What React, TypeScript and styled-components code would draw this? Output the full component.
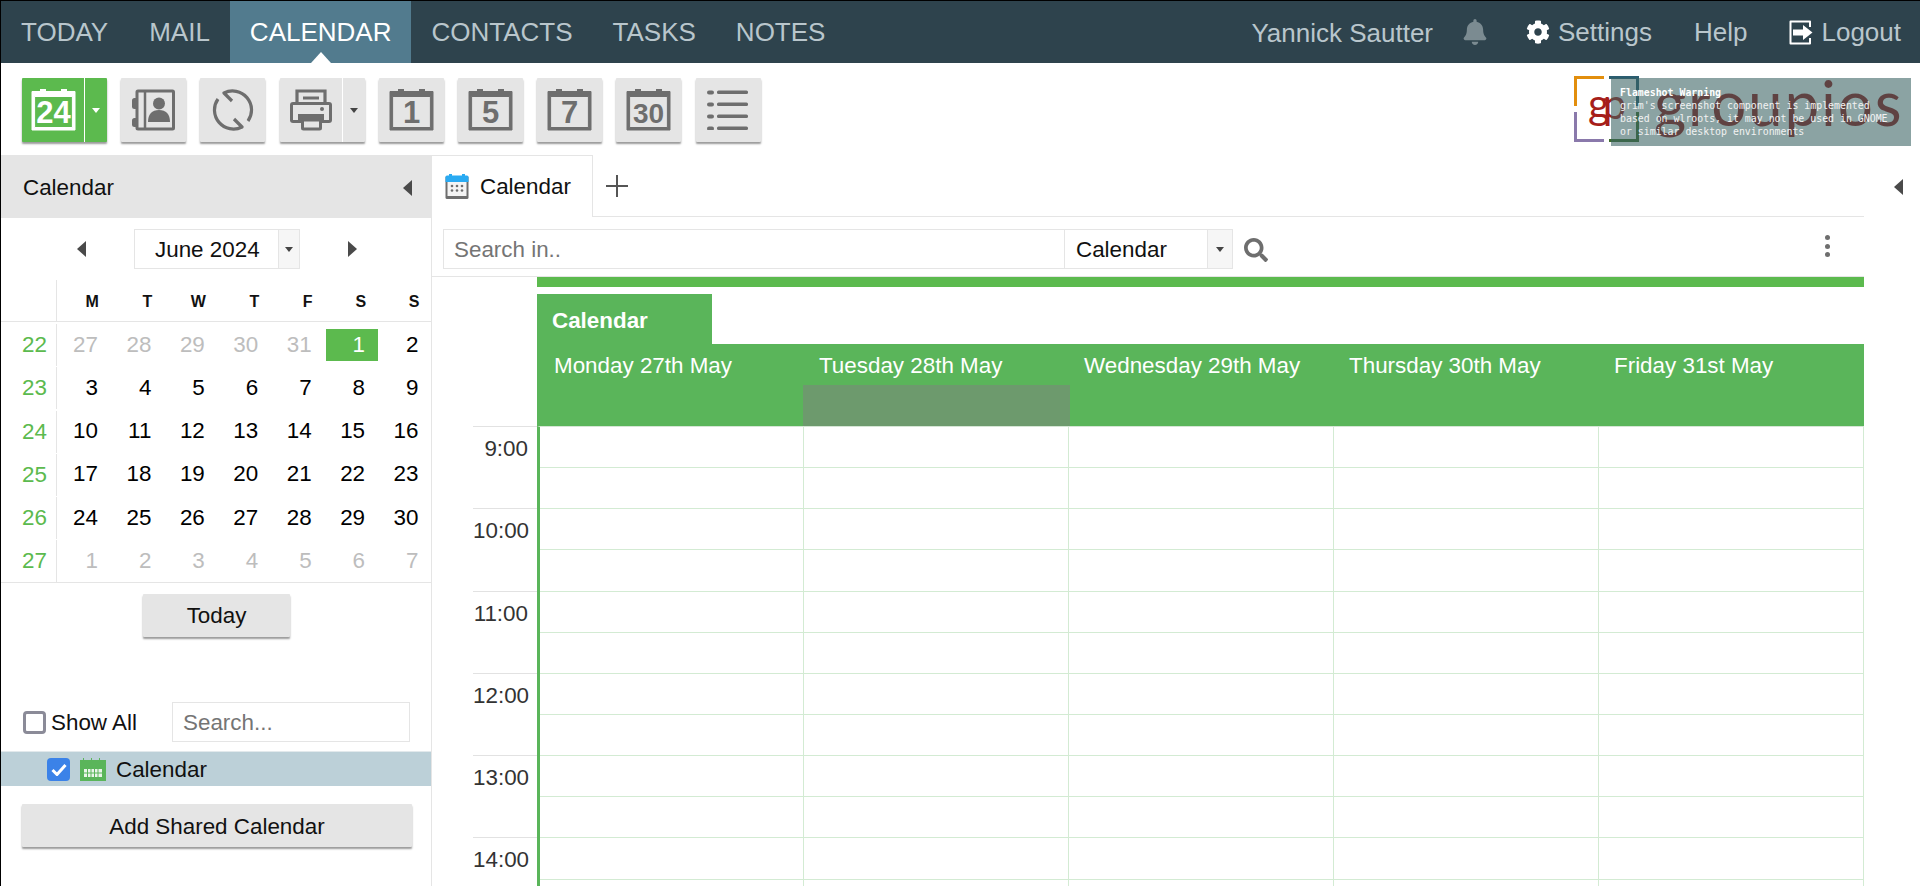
import { styled, createGlobalStyle } from "styled-components";
import { FaBell, FaCog, FaSearch } from "react-icons/fa";

const GlobalStyle = createGlobalStyle`
  html, body {
    margin: 0;
    padding: 0;
    background: #fff;
  }
  * {
    box-sizing: border-box;
  }
  body {
    font-family: "Liberation Sans", Arial, sans-serif;
    font-size: 22.4px;
    color: #111;
  }
`;

const Page = styled.div`
  width: 1920px;
  height: 886px;
  overflow: hidden;
  border-top: 1px solid #000;
  border-left: 1px solid #000;
  display: flex;
  flex-direction: column;
`;

/* top navigation */
const NavBar = styled.nav`
  height: 62px;
  flex: none;
  display: flex;
  align-items: stretch;
  background: #2e434d;
  font-size: 26px;
  color: #b9c6cc;
`;

const NavTab = styled.a<{ $active?: boolean }>`
  position: relative;
  display: flex;
  align-items: center;
  padding: 0 20px;
  background: ${(p) => (p.$active ? "#527b8e" : "transparent")};
  color: ${(p) => (p.$active ? "#fff" : "inherit")};

  &:first-child {
    padding-right: 21px;
  }

  &::after {
    content: "";
    display: ${(p) => (p.$active ? "block" : "none")};
    position: absolute;
    left: calc(50% - 10px);
    bottom: 0;
    border-left: 10px solid transparent;
    border-right: 10px solid transparent;
    border-bottom: 11px solid #fff;
  }
`;

const NavRight = styled.div`
  margin-left: auto;
  display: flex;
  align-items: center;
  padding: 0 19px 0 0;
`;

const UserName = styled.span`
  margin-right: 29px;
  padding-top: 3px;
`;

const NavLink = styled.a`
  display: flex;
  align-items: center;
  gap: 8px;
  margin-left: 42px;

  svg {
    flex: none;
  }
`;

const SettingsLink = styled(NavLink)`
  margin-left: 38px;
`;

/* toolbar */
const Toolbar = styled.div`
  height: 92px;
  flex: none;
  display: flex;
  align-items: flex-start;
  gap: 14.2px;
  padding: 15px 9px 0 21px;
`;

const ToolButton = styled.div<{ $primary?: boolean; $wide?: boolean }>`
  width: ${(p) => (p.$wide ? "85px" : "65px")};
  height: 64px;
  display: flex;
  background: ${(p) => (p.$primary ? "#5cba4e" : "#e5e5e5")};
  box-shadow: 0 2px 2px #9a9a9a;
  border-radius: 1px;
`;

const ToolFace = styled.div`
  flex: 1;
  display: flex;
  align-items: center;
  justify-content: center;
`;

const ToolCaret = styled.div`
  width: 23px;
  flex: none;
  display: flex;
  align-items: center;
  justify-content: center;
  border-left: 1px solid #fff;
`;

const Caret = styled.span<{ $color?: string }>`
  display: block;
  border-left: 4.5px solid transparent;
  border-right: 4.5px solid transparent;
  border-top: 5px solid ${(p) => p.$color ?? "#444"};
`;

/* logo with the warning laid over it */
const Logo = styled.div`
  position: relative;
  width: 337px;
  height: 70px;
  margin-left: auto;
  margin-top: -2px;
  display: flex;
`;

const LogoMark = styled.div`
  position: relative;
  width: 65px;
  height: 66px;
  flex: none;
`;

const LogoInitials = styled.span`
  position: absolute;
  left: 14px;
  top: 3px;
  font-family: Lato, sans-serif;
  font-size: 42px;
  font-weight: 400;
  line-height: 48px;
  letter-spacing: -7px;
  color: #a61e1a;
`;

const LogoWord = styled.span`
  margin-left: 15px;
  margin-top: -9px;
  font-family: Lato, sans-serif;
  font-size: 62px;
  line-height: 70px;
  letter-spacing: 1.8px;
  white-space: nowrap;
  color: #941414;
`;

const Warning = styled.div`
  position: absolute;
  left: 37px;
  top: 2px;
  width: 300px;
  height: 68px;
  padding: 8px 0 0 9px;
  background: rgba(58, 98, 98, 0.59);
  color: #f2f2f2;
  font-family: "DejaVu Sans Mono", monospace;
  font-size: 9.9px;
  line-height: 13px;
  white-space: nowrap;
`;

const WarningTitle = styled.div`
  font-weight: 700;
  color: #fff;
`;

/* page body */
const Body = styled.div`
  flex: 1;
  display: flex;
  min-height: 0;
`;

const Sidebar = styled.aside`
  width: 431px;
  flex: none;
  border-right: 1px solid #e5e5e5;
`;

const SideHeader = styled.div`
  height: 63px;
  display: flex;
  align-items: center;
  justify-content: space-between;
  padding: 2px 19px 0 22px;
  background: #e5e5e5;
`;

const Arrow = styled.span<{ $dir: "left" | "right" }>`
  display: block;
  border-top: 8px solid transparent;
  border-bottom: 8px solid transparent;
  ${(p) => (p.$dir === "left" ? "border-right" : "border-left")}: 9px solid #4a4a4a;
`;

const MonthRow = styled.div`
  height: 62px;
  display: flex;
  align-items: center;
  justify-content: center;
  gap: 48px;
  padding-left: 2px;
`;

const MonthSelect = styled.div`
  width: 166px;
  height: 40px;
  display: flex;
  border: 1px solid #e5e5e5;
`;

const SelectValue = styled.div<{ $inset: number }>`
  flex: 1;
  display: flex;
  align-items: center;
  padding: 1px 0 0 ${(p) => p.$inset}px;
`;

const SelectCaret = styled.div<{ $width: number }>`
  width: ${(p) => p.$width}px;
  flex: none;
  display: flex;
  align-items: center;
  justify-content: center;
  background: #f6f6f6;
  border-left: 1px solid #e5e5e5;
`;

const MiniCal = styled.div`
  display: grid;
  grid-template-columns: 56px repeat(7, 1fr);
  grid-auto-rows: 43.2px;
  border-bottom: 1px solid #e5e5e5;
`;

const HeadGutter = styled.div`
  height: 42px;
  border-right: 1px solid #e5e5e5;
  border-bottom: 1px solid #e5e5e5;
`;

const HeadCell = styled.div`
  height: 42px;
  padding: 10px 11.5px 0 0;
  text-align: right;
  font-size: 16px;
  font-weight: 700;
  line-height: 24px;
  border-bottom: 1px solid #e5e5e5;
`;

const WeekCell = styled.div`
  height: 42px;
  margin-top: 1px;
  padding-right: 9px;
  text-align: right;
  line-height: 42px;
  color: #5cba4e;
  border-right: 1px solid #e5e5e5;
`;

const DayCell = styled.div<{ $muted?: boolean; $selected?: boolean }>`
  height: 32px;
  margin: 5.6px 0 0 ${(p) => (p.$selected ? "1.5px" : "0")};
  padding-right: 12.5px;
  text-align: right;
  line-height: 32px;
  color: ${(p) => (p.$selected ? "#fff" : p.$muted ? "#bdbdbd" : "#000")};
  background: ${(p) => (p.$selected ? "#5cba4e" : "transparent")};
`;

const GrayButton = styled.button<{ $width: number }>`
  display: block;
  width: ${(p) => p.$width}px;
  height: 43px;
  border: 0;
  border-radius: 1px;
  background: #e5e5e5;
  box-shadow: 0 2px 2px #9a9a9a;
  font: inherit;
  color: #111;
  padding: 0;
`;

const AddButton = styled(GrayButton)`
  padding-top: 2px;
`;

const TodayWrap = styled.div`
  display: flex;
  justify-content: center;
  padding: 11px 0 0 1px;
  height: 119px;
`;

const ShowAllRow = styled.div`
  height: 40px;
  display: flex;
  align-items: center;
  padding-left: 22px;
`;

const ShowAllLabel = styled.span`
  padding-top: 1px;
`;

const EmptyCheck = styled.span`
  width: 23px;
  height: 23px;
  flex: none;
  margin-right: 5px;
  border: 3px solid #8b8b98;
  border-radius: 4px;
`;

const TextField = styled.input<{ $width: number }>`
  width: ${(p) => p.$width}px;
  height: 40px;
  flex: none;
  padding: 1px 10px 0;
  border: 1px solid #e5e5e5;
  outline: none;
  background: #fff;
  font: inherit;
  color: #111;

  &::placeholder {
    color: #757575;
    opacity: 1;
  }
`;

const SideSearch = styled(TextField)`
  margin-left: auto;
  margin-right: 21px;
`;

const CalendarRow = styled.div`
  height: 35px;
  margin-top: 9px;
  display: flex;
  align-items: center;
  padding-left: 46px;
  background: #bcd0d8;
  border-top: 1px solid #e2e9ec;
`;

const BlueCheck = styled.span`
  width: 23px;
  height: 23px;
  flex: none;
  display: flex;
  align-items: center;
  justify-content: center;
  margin-right: 10px;
  border-radius: 4px;
  background: #3b82e8;
`;

const RowLabel = styled.span`
  margin-left: 10px;
  padding-top: 1px;
`;

const AddWrap = styled.div`
  padding: 18px 0 0 21px;
`;

/* main area */
const Main = styled.main`
  flex: 1;
  display: flex;
  min-width: 0;
`;

const Content = styled.div`
  width: 1432px;
  flex: none;
  display: flex;
  flex-direction: column;
`;

const RightRail = styled.div`
  flex: 1;
  display: flex;
  align-items: flex-start;
  padding: 24px 0 0 30px;
`;

const TabBar = styled.div`
  height: 62px;
  flex: none;
  display: flex;
  align-items: flex-start;
  border-bottom: 1px solid #e5e5e5;
`;

const ViewTab = styled.div`
  width: 161px;
  height: 62px;
  display: flex;
  align-items: center;
  gap: 11px;
  padding: 0 0 0 13px;
  background: #fff;
  border-top: 1px solid #e5e5e5;
  border-right: 1px solid #e5e5e5;
`;

const AddTab = styled.div`
  margin: 20px 0 0 13px;
  display: flex;
`;

const SearchRow = styled.div`
  height: 60px;
  flex: none;
  display: flex;
  align-items: flex-start;
  padding: 12px 0 0 11px;
  border-bottom: 1px solid #e5e5e5;
`;

const ScopeSelect = styled.div`
  width: 169px;
  height: 40px;
  display: flex;
  margin-left: -1px;
  border: 1px solid #e5e5e5;
`;

const SearchIcon = styled.div`
  display: flex;
  margin: 9px 0 0 11px;
  color: #6e6e6e;
`;

const Kebab = styled.div`
  margin: 6px 34px 0 auto;
  display: flex;
  flex-direction: column;
  gap: 3.5px;
`;

const KebabDot = styled.span`
  width: 5px;
  height: 5px;
  border-radius: 50%;
  background: #6e6e6e;
`;

const Schedule = styled.div`
  flex: 1;
  min-height: 0;
  display: flex;
  flex-direction: column;
`;

const ResourceBar = styled.div`
  height: 10px;
  flex: none;
  margin-left: 105px;
  background: #5cba4e;
`;

const ResourceTag = styled.div`
  width: 175px;
  height: 50px;
  flex: none;
  display: flex;
  align-items: center;
  margin: 7px 0 0 105px;
  padding: 3px 0 0 15px;
  background: #5ab55a;
  color: #fff;
  font-weight: 700;
`;

const DayHeads = styled.div`
  height: 82px;
  flex: none;
  display: grid;
  grid-template-columns: 266px repeat(4, 265px);
  margin-left: 105px;
  background: #5ab55a;
  color: #fff;
`;

const DayHead = styled.div`
  display: flex;
  flex-direction: column;

  &:first-child > div:first-child {
    padding-left: 17px;
  }
`;

const DayTitle = styled.div`
  height: 41px;
  padding: 9px 0 0 16px;
  line-height: 26px;
`;

const AllDaySlot = styled.div<{ $today?: boolean }>`
  height: 41px;
  width: ${(p) => (p.$today ? "calc(100% + 2px)" : "100%")};
  background: ${(p) => (p.$today ? "#6d9a6d" : "transparent")};
`;

const TimeGrid = styled.div`
  display: flex;
  padding-left: 41px;
`;

const Hours = styled.div`
  width: 64px;
  flex: none;
`;

const HourCell = styled.div`
  height: 82.3px;
  padding: 9px 9px 0 0;
  text-align: right;
  line-height: 26px;
  color: #333;
  border-top: 1px solid #e2e2e2;
`;

const Days = styled.div`
  display: grid;
  grid-template-columns: 264px repeat(4, 265px);
  border-left: 3px solid #5ab55a;
  border-top: 1px solid #d5e6d5;
`;

const DayColumn = styled.div`
  border-right: 1px solid #d3ebd3;
`;

const Slot = styled.div`
  height: 41.15px;
  border-bottom: 1px solid #d3ebd3;
`;

/* drawn icons */
const ICON_GRAY = "#6e6e6e";

const CalendarGlyph = ({ label, color, size = 31 }: { label: string; color: string; size?: number }) => (
  <svg width="45" height="42" viewBox="0 0 45 42">
    <path d="M9 0h6v3H9zM30 0h6v3h-6z" fill={color} />
    <path
      d="M1 2.5h43v38.5H1zM3.6 7.5v31h37.8v-31z"
      fill={color}
      fillRule="evenodd"
      stroke={color}
      strokeLinejoin="round"
    />
    <text
      x="22.5"
      y="34"
      textAnchor="middle"
      fontFamily="Liberation Sans, sans-serif"
      fontWeight="700"
      fontSize={size}
      fill={color}
    >
      {label}
    </text>
  </svg>
);

const AddressBookGlyph = () => (
  <svg width="43" height="42" viewBox="0 0 43 42">
    <rect x="5" y="2" width="36.5" height="38" rx="1" fill="none" stroke={ICON_GRAY} strokeWidth="3" />
    <path d="M13 2v38" stroke={ICON_GRAY} strokeWidth="2.5" />
    <rect x="0" y="9" width="6" height="11" rx="2.5" fill={ICON_GRAY} />
    <rect x="0" y="29" width="6" height="9" rx="2.5" fill={ICON_GRAY} />
    <circle cx="27" cy="14.5" r="6" fill={ICON_GRAY} />
    <path d="M16 33c0-8 4-12 11-12s11 4 11 12z" fill={ICON_GRAY} />
  </svg>
);

const SyncGlyph = () => (
  <svg width="42" height="42" viewBox="0 0 42 42" fill="none" stroke={ICON_GRAY} strokeWidth="3.2" strokeLinejoin="round">
    <path d="M20 12L12 4A19 19 0 0 1 36 32" />
    <path d="M22 30L30 38A19 19 0 0 1 6 10" />
  </svg>
);

const PrinterGlyph = () => (
  <svg width="42" height="42" viewBox="0 0 42 42">
    <path d="M7 14V2h28v12" fill="none" stroke={ICON_GRAY} strokeWidth="3.2" />
    <path d="M13 9h16" stroke={ICON_GRAY} strokeWidth="3" />
    <path
      d="M3 13h36a3 3 0 0 1 3 3v15a3 3 0 0 1-3 3H3a3 3 0 0 1-3-3V16a3 3 0 0 1 3-3z"
      fill={ICON_GRAY}
    />
    <rect x="3" y="16" width="36" height="9" fill="#e5e5e5" />
    <rect x="3" y="25" width="5" height="6" fill="#e5e5e5" />
    <rect x="34" y="25" width="5" height="6" fill="#e5e5e5" />
    <circle cx="32" cy="20" r="2" fill={ICON_GRAY} />
    <rect x="12.5" y="31" width="18" height="9" rx="1" fill="#e5e5e5" stroke={ICON_GRAY} strokeWidth="3" />
  </svg>
);

const ListGlyph = () => (
  <svg width="42" height="40" viewBox="0 0 42 40" fill={ICON_GRAY}>
    {[3, 15, 27, 39].map((y) => (
      <g key={y}>
        <rect x="0" y={y - 2.5} width="7" height="4" rx="2" />
        <rect x="10" y={y - 2.5} width="31" height="3.5" rx="1.5" />
      </g>
    ))}
  </svg>
);

const LogoutGlyph = () => (
  <svg width="24" height="25" viewBox="0 0 24 25">
    <path d="M21 7V1.5H1.5v22H21V18" fill="none" stroke="#fff" strokeWidth="2" strokeLinejoin="round" />
    <path d="M4 9.5h10V5l9.5 7.5L14 20v-4.5H4z" fill="#fff" />
  </svg>
);

const LogoBrackets = () => (
  <svg width="65" height="66" viewBox="0 0 65 66" fill="none" strokeWidth="3">
    <path d="M30 1.5H1.5V30" stroke="#e28e0d" />
    <path d="M1.5 36v28.5H30" stroke="#8a79ab" />
    <path d="M35 1.5h28.5V30" stroke="#2b5d70" />
    <path d="M63.5 36v28.5H35" stroke="#3d6b2a" />
  </svg>
);

const TabCalendarIcon = () => (
  <svg width="24" height="25" viewBox="0 0 24 25">
    <rect x="0.5" y="2" width="23" height="23" rx="1.5" fill="#6e6e6e" />
    <rect x="2.5" y="8" width="19" height="14" fill="#f4f4f4" />
    <path d="M0.5 3a1.5 1.5 0 0 1 1.5-1.5h2V0h3v1.5h10V0h3v1.5h2A1.5 1.5 0 0 1 23.5 3v5H.5z" fill="#29aaf2" />
    <g fill="#6e6e6e">
      {[7, 12, 17].flatMap((x) =>
        [12, 16.5].map((y) => <circle key={`${x}-${y}`} cx={x} cy={y} r="1.3" />),
      )}
    </g>
  </svg>
);

const RowCalendarIcon = () => (
  <svg width="26" height="23" viewBox="0 0 26 23">
    <path d="M0 2h3V0h1v2h7V0h1v2h7V0h1v2h6v21H0z" fill="#5ab55a" />
    <rect x="4" y="11" width="18" height="8" fill="#eaf5ea" />
    <g fill="#5ab55a">
      {[7, 10.5, 14, 17.5].map((x) => (
        <rect key={x} x={x} y="11" width="1" height="8" />
      ))}
      <rect x="4" y="14.5" width="18" height="1" />
    </g>
  </svg>
);

const WEEKDAYS = ["M", "T", "W", "T", "F", "S", "S"];

const WEEKS = [
  { week: 22, days: [27, 28, 29, 30, 31, 1, 2] },
  { week: 23, days: [3, 4, 5, 6, 7, 8, 9] },
  { week: 24, days: [10, 11, 12, 13, 14, 15, 16] },
  { week: 25, days: [17, 18, 19, 20, 21, 22, 23] },
  { week: 26, days: [24, 25, 26, 27, 28, 29, 30] },
  { week: 27, days: [1, 2, 3, 4, 5, 6, 7] },
];

const DAY_TITLES = [
  "Monday 27th May",
  "Tuesday 28th May",
  "Wednesday 29th May",
  "Thursday 30th May",
  "Friday 31st May",
];

const HOURS = ["9:00", "10:00", "11:00", "12:00", "13:00", "14:00"];

const isMuted = (weekIndex: number, dayIndex: number) =>
  (weekIndex === 0 && dayIndex < 5) || weekIndex === 5;

const App = () => {
  return (
    <Page>
      <GlobalStyle />
      <NavBar>
        <NavTab>TODAY</NavTab>
        <NavTab>MAIL</NavTab>
        <NavTab $active>CALENDAR</NavTab>
        <NavTab>CONTACTS</NavTab>
        <NavTab>TASKS</NavTab>
        <NavTab>NOTES</NavTab>
        <NavRight>
          <UserName>Yannick Sautter</UserName>
          <FaBell size={26} color="#7b8b91" />
          <SettingsLink>
            <FaCog size={24} color="#fff" />
            Settings
          </SettingsLink>
          <NavLink>Help</NavLink>
          <NavLink>
            <LogoutGlyph />
            Logout
          </NavLink>
        </NavRight>
      </NavBar>

      <Toolbar>
        <ToolButton $primary $wide>
          <ToolFace>
            <CalendarGlyph label="24" color="#fff" />
          </ToolFace>
          <ToolCaret>
            <Caret $color="#fff" />
          </ToolCaret>
        </ToolButton>
        <ToolButton>
          <ToolFace>
            <AddressBookGlyph />
          </ToolFace>
        </ToolButton>
        <ToolButton>
          <ToolFace>
            <SyncGlyph />
          </ToolFace>
        </ToolButton>
        <ToolButton $wide>
          <ToolFace>
            <PrinterGlyph />
          </ToolFace>
          <ToolCaret>
            <Caret />
          </ToolCaret>
        </ToolButton>
        <ToolButton>
          <ToolFace>
            <CalendarGlyph label="1" color={ICON_GRAY} />
          </ToolFace>
        </ToolButton>
        <ToolButton>
          <ToolFace>
            <CalendarGlyph label="5" color={ICON_GRAY} />
          </ToolFace>
        </ToolButton>
        <ToolButton>
          <ToolFace>
            <CalendarGlyph label="7" color={ICON_GRAY} />
          </ToolFace>
        </ToolButton>
        <ToolButton>
          <ToolFace>
            <CalendarGlyph label="30" color={ICON_GRAY} size={28} />
          </ToolFace>
        </ToolButton>
        <ToolButton>
          <ToolFace>
            <ListGlyph />
          </ToolFace>
        </ToolButton>

        <Logo>
          <LogoMark>
            <LogoBrackets />
            <LogoInitials>gp</LogoInitials>
          </LogoMark>
          <LogoWord>groupios</LogoWord>
          <Warning>
            <WarningTitle>Flameshot Warning</WarningTitle>
            <div>grim's screenshot component is implemented</div>
            <div>based on wlroots, it may not be used in GNOME</div>
            <div>or similar desktop environments</div>
          </Warning>
        </Logo>
      </Toolbar>

      <Body>
        <Sidebar>
          <SideHeader>
            Calendar
            <Arrow $dir="left" />
          </SideHeader>
          <MonthRow>
            <Arrow $dir="left" />
            <MonthSelect>
              <SelectValue $inset={20}>June 2024</SelectValue>
              <SelectCaret $width={21}>
                <Caret />
              </SelectCaret>
            </MonthSelect>
            <Arrow $dir="right" />
          </MonthRow>
          <MiniCal>
            <HeadGutter />
            {WEEKDAYS.map((d, i) => (
              <HeadCell key={i}>{d}</HeadCell>
            ))}
            {WEEKS.map((row, w) => [
              <WeekCell key={row.week}>{row.week}</WeekCell>,
              ...row.days.map((day, i) => (
                <DayCell
                  key={`${w}-${i}`}
                  $muted={isMuted(w, i)}
                  $selected={w === 0 && i === 5}
                >
                  {day}
                </DayCell>
              )),
            ])}
          </MiniCal>
          <TodayWrap>
            <GrayButton $width={147}>Today</GrayButton>
          </TodayWrap>
          <ShowAllRow>
            <EmptyCheck />
            <ShowAllLabel>Show All</ShowAllLabel>
            <SideSearch $width={238} placeholder="Search..." readOnly />
          </ShowAllRow>
          <CalendarRow>
            <BlueCheck>
              <svg width="16" height="13" viewBox="0 0 16 13">
                <path d="M1.5 7l4.5 4.5L14.5 2" fill="none" stroke="#fff" strokeWidth="3" />
              </svg>
            </BlueCheck>
            <RowCalendarIcon />
            <RowLabel>Calendar</RowLabel>
          </CalendarRow>
          <AddWrap>
            <AddButton $width={390}>Add Shared Calendar</AddButton>
          </AddWrap>
        </Sidebar>

        <Main>
          <Content>
            <TabBar>
              <ViewTab>
                <TabCalendarIcon />
                Calendar
              </ViewTab>
              <AddTab>
                <svg width="22" height="22" viewBox="0 0 22 22">
                  <path d="M11 0v22M0 11h22" stroke="#555" strokeWidth="2" />
                </svg>
              </AddTab>
            </TabBar>
            <SearchRow>
              <TextField $width={622} placeholder="Search in.." readOnly />
              <ScopeSelect>
                <SelectValue $inset={11}>Calendar</SelectValue>
                <SelectCaret $width={25}>
                  <Caret />
                </SelectCaret>
              </ScopeSelect>
              <SearchIcon>
                <FaSearch size={24} />
              </SearchIcon>
              <Kebab>
                <KebabDot />
                <KebabDot />
                <KebabDot />
              </Kebab>
            </SearchRow>
            <Schedule>
              <ResourceBar />
              <ResourceTag>Calendar</ResourceTag>
              <DayHeads>
                {DAY_TITLES.map((title, i) => (
                  <DayHead key={title}>
                    <DayTitle>{title}</DayTitle>
                    <AllDaySlot $today={i === 1} />
                  </DayHead>
                ))}
              </DayHeads>
              <TimeGrid>
                <Hours>
                  {HOURS.map((h) => (
                    <HourCell key={h}>{h}</HourCell>
                  ))}
                </Hours>
                <Days>
                  {DAY_TITLES.map((title) => (
                    <DayColumn key={title}>
                      {Array.from({ length: 12 }, (_, i) => (
                        <Slot key={i} />
                      ))}
                    </DayColumn>
                  ))}
                </Days>
              </TimeGrid>
            </Schedule>
          </Content>
          <RightRail>
            <Arrow $dir="left" />
          </RightRail>
        </Main>
      </Body>
    </Page>
  );
};

export default App;
